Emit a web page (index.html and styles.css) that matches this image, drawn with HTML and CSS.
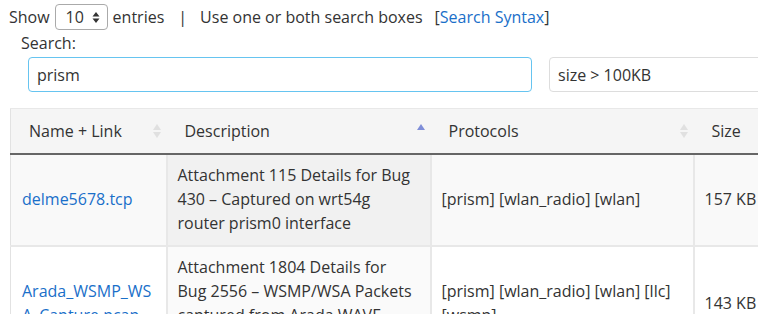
FILE: index.html
```html
<!DOCTYPE html>
<html lang="en">
<head>
    <meta charset="UTF-8">
    <title>Captures</title>
    <link rel="stylesheet" href="styles.css">
</head>
<body>
<div class="toolbar">
    <span>Show</span>
    <span class="select">10 <svg width="8" height="13" viewBox="0 0 8 13"><path d="M4 1 L7.5 5.5 H0.5 Z M4 12 L7.5 7.5 H0.5 Z" fill="#333"/></svg></span>
    <span>entries</span>
    <span class="sep">|</span>
    <span>Use one or both search boxes</span>
    <span class="syntax">[<a href="#">Search Syntax</a>]</span>
</div>
<div class="search">
    <div class="label">Search:</div>
    <div class="boxes">
        <div class="box focus">prism</div>
        <div class="box">size &gt; 100KB</div>
    </div>
</div>
<table class="grid">
    <thead>
    <tr>
        <th class="c-name">Name + Link <i class="sort"></i></th>
        <th class="c-desc">Description <i class="sort asc"></i></th>
        <th class="c-proto">Protocols <i class="sort"></i></th>
        <th class="c-size">Size</th>
    </tr>
    </thead>
    <tbody>
    <tr class="odd">
        <td><a href="#">delme5678.tcp</a></td>
        <td class="sorted">Attachment 115 Details for Bug 430 – Captured on wrt54g router prism0 interface</td>
        <td>[prism] [wlan_radio] [wlan]</td>
        <td>157 KB</td>
    </tr>
    <tr class="even">
        <td><a href="#">Arada_WSMP_WSA_Capture.pcap</a></td>
        <td class="sorted">Attachment 1804 Details for Bug 2556 – WSMP/WSA Packets captured from Arada WAVE radios</td>
        <td>[prism] [wlan_radio] [wlan] [llc] [wsmp]</td>
        <td>143 KB</td>
    </tr>
    </tbody>
</table>
</body>
</html>
```

FILE: styles.css
```css
* {
    box-sizing: border-box;
}
html, body {
    overflow: hidden;
}
body {
    margin: 0;
    padding: 4px 0 0 9px;
    font: 16px/24px "Open Sans", "Liberation Sans", sans-serif;
    color: #333;
    width: 900px;
}
a {
    color: #1a6fc9;
    text-decoration: none;
}
.toolbar {
    display: flex;
    align-items: center;
    height: 26px;
}
.select {
    display: inline-flex;
    align-items: center;
    justify-content: space-between;
    width: 53px;
    height: 26px;
    margin: 0 5px 0 5px;
    padding: 0 7px 0 10px;
    border: 1px solid #aaa;
    border-radius: 4px;
}
.sep {
    margin: 0 13px 0 14px;
}
.syntax {
    margin-left: 12px;
}
.search {
    padding-left: 12px;
}
.label {
    margin-top: 1px;
    height: 26px;
}
.boxes {
    display: flex;
    gap: 17px;
    padding-left: 7px;
}
.box {
    height: 35px;
    padding: 5px 8px;
    border: 1px solid #ddd;
    border-radius: 4px;
    width: 300px;
}
.box.focus {
    width: 504px;
    border-color: #66c4f0;
}
.grid {
    margin: 16px 0 0 1px;
    border-collapse: collapse;
    table-layout: fixed;
    width: 860px;
    border-left: 1px solid #e2e2e2;
}
.grid th {
    position: relative;
    text-align: left;
    font-weight: normal;
    height: 45px;
    padding: 0 18px;
    background: #f5f5f5;
    border-top: 1px solid #e8e8e8;
    border-bottom: 2px solid #666;
}
.c-name { width: 156px; }
.c-desc { width: 264px; }
.c-proto { width: 263px; }
.c-size { width: 177px; }
.grid td {
    padding: 8px 14px 10px 10px;
    border-left: 2px solid #e8e8e8;
    border-bottom: 2px solid #e8e8e8;
    vertical-align: middle;
    overflow-wrap: anywhere;
}
.grid td:first-child {
    border-left: 0;
    padding-left: 11px;
}
.grid tr.odd td {
    background: #f9f9f9;
}
.grid tr.odd td.sorted {
    background: #f1f1f1;
}
.grid tr.even td {
    background: #fff;
}
.grid tr.even td.sorted {
    background: #fafafa;
}
.sort {
    position: absolute;
    right: 5px;
    top: 15px;
    width: 9px;
    height: 14px;
}
.sort::before, .sort::after {
    content: "";
    position: absolute;
    left: 0;
    border-left: 4px solid transparent;
    border-right: 4px solid transparent;
}
.sort::before {
    top: 0;
    border-bottom: 6px solid #e0e0e0;
}
.sort::after {
    bottom: 0;
    border-top: 6px solid #e0e0e0;
}
.sort.asc::before {
    border-bottom-color: #7f8ed8;
}
.sort.asc::after {
    display: none;
}
```
